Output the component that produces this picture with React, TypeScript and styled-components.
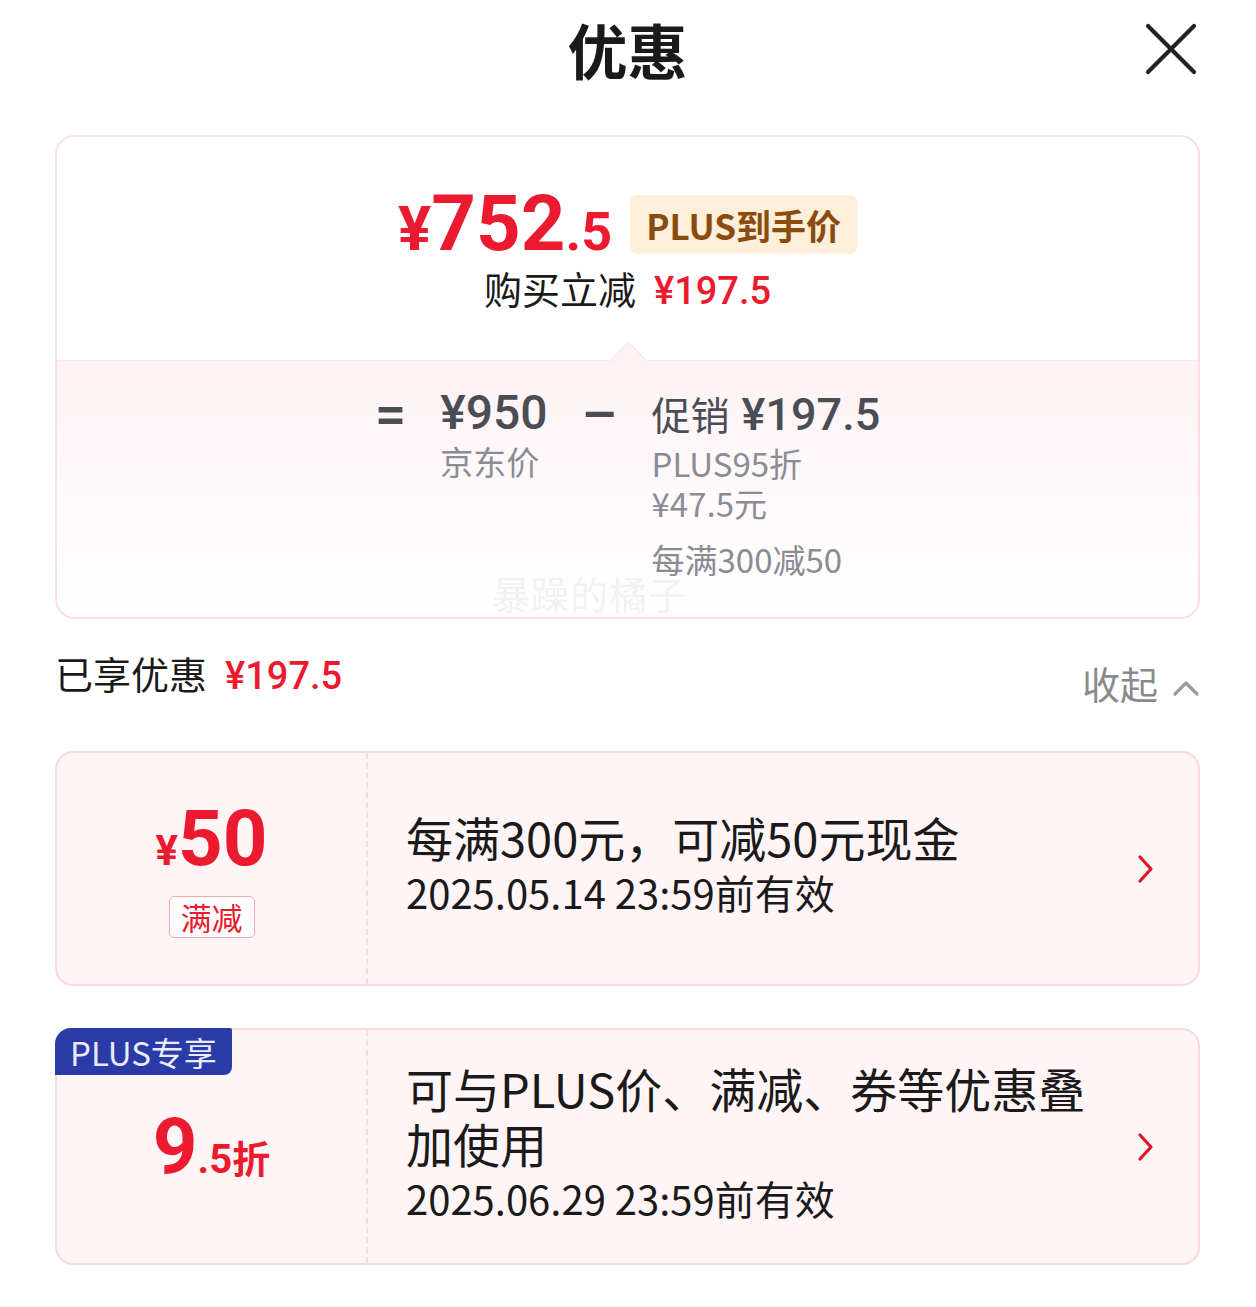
import { FC } from 'react';
import styled, { createGlobalStyle } from 'styled-components';

const GlobalStyle = createGlobalStyle`
  body {
    margin: 0;
    background: #ffffff;
    font-family: "Noto Sans CJK SC", "Noto Sans", sans-serif;
    color: #1a1a1a;
  }
`;

const RED = '#ec1a2e';
const NUM = `Roboto, "Noto Sans CJK SC", sans-serif`;

const Page = styled.div`
  width: 1256px;
  box-sizing: border-box;
  padding: 0 56px 40px 55px;
`;

const Header = styled.div`
  height: 98px;
  display: grid;
  grid-template-columns: 1fr auto 1fr;
  align-items: center;
`;

const Title = styled.h1`
  grid-column: 2;
  margin: 0;
  font-size: 60px;
  font-weight: 700;
  line-height: 1;
  color: #1a1a1a;
`;

const CloseBtn = styled.button`
  grid-column: 3;
  justify-self: end;
  margin-right: 2px;
  padding: 0;
  border: 0;
  background: none;
  width: 54px;
  height: 54px;
  display: flex;
`;

const SummaryCard = styled.div`
  margin-top: 37px;
  border: 2px solid #fbdde2;
  border-radius: 20px;
  overflow: hidden;
  position: relative;
`;

const SummaryTop = styled.div`
  height: 223px;
  box-sizing: border-box;
  padding-top: 48px;
  display: flex;
  flex-direction: column;
  align-items: center;
  background: #ffffff;
  position: relative;
`;

const PriceRow = styled.div`
  display: flex;
  align-items: center;
  gap: 18px;
`;

const Price = styled.div`
  display: flex;
  align-items: baseline;
  color: ${RED};
  font-family: ${NUM};
  font-weight: 700;
  line-height: 1;
`;

const PricePart = styled.span<{ $size: number }>`
  font-size: ${p => p.$size}px;
`;

const PlusBadge = styled.span`
  display: inline-flex;
  align-items: center;
  height: 59px;
  padding: 0 16px;
  border-radius: 7px;
  background: #fdefd9;
  color: #8a4b0f;
  font-size: 35px;
  font-weight: 700;
`;

const SubLine = styled.div`
  margin-top: 2px;
  font-size: 38px;
  line-height: 46px;
  display: flex;
  align-items: baseline;
`;

const RedAmount = styled.span<{ $size: number; $weight?: number }>`
  color: ${RED};
  font-family: ${NUM};
  font-size: ${p => p.$size}px;
  font-weight: ${p => p.$weight ?? 500};
  margin-left: 18px;
`;

const Notch = styled.span`
  position: absolute;
  left: 50%;
  bottom: -12px;
  width: 24px;
  height: 24px;
  margin-left: -12px;
  background: #fdf3f5;
  border-top: 1px solid #fbe3e8;
  border-left: 1px solid #fbe3e8;
  transform: rotate(45deg);
`;

const SummaryBottom = styled.div`
  height: 257px;
  box-sizing: border-box;
  padding-top: 24px;
  border-top: 1px solid #fbe8ec;
  background: linear-gradient(180deg, #fdf2f4 0%, #fffafb 60%, #ffffff 100%);
  display: flex;
  justify-content: center;
  align-items: flex-start;
  gap: 34px;
`;

const Operator = styled.span`
  font-family: ${NUM};
  font-size: 56px;
  font-weight: 500;
  line-height: 60px;
  color: #4b4d55;
`;

const Column = styled.div`
  display: flex;
  flex-direction: column;
`;

const MainFigure = styled.div`
  font-size: 39px;
  line-height: 56px;
  color: #4b4d55;
  display: flex;
  align-items: baseline;
`;

const Figure = styled.span<{ $gap?: number; $size?: number }>`
  font-family: ${NUM};
  font-size: ${p => p.$size ?? 48}px;
  font-weight: 500;
  margin-left: ${p => p.$gap ?? 0}px;
`;

const Note = styled.div<{ $gap?: number }>`
  font-size: 33px;
  line-height: 40px;
  color: #8a8c94;
  margin-top: ${p => p.$gap ?? 0}px;
`;

const Watermark = styled.span`
  position: absolute;
  left: 435px;
  bottom: 2px;
  font-size: 38px;
  line-height: 44px;
  color: rgba(236, 236, 240, 0.7);
  letter-spacing: 1px;
`;

const SavedRow = styled.div`
  margin-top: 28px;
  display: flex;
  justify-content: space-between;
  align-items: flex-start;
`;

const SavedLabel = styled.div`
  font-size: 38px;
  line-height: 52px;
  display: flex;
  align-items: baseline;
`;

const Collapse = styled.div`
  margin-top: 10px;
  display: flex;
  align-items: center;
  gap: 14px;
  font-size: 38px;
  line-height: 52px;
  color: #8a8a8a;

  svg {
    margin-top: 10px;
  }
`;

const CouponList = styled.div`
  margin-top: 42px;
  display: flex;
  flex-direction: column;
  gap: 42px;
`;

const Coupon = styled.div<{ $height: number }>`
  position: relative;
  height: ${p => p.$height}px;
  box-sizing: border-box;
  border: 2px solid #f8dade;
  border-radius: 18px;
  background: #fff5f6;
  display: flex;
`;

const CouponLeft = styled.div`
  width: 309px;
  flex-shrink: 0;
  border-right: 2px dashed #f3dce0;
  display: flex;
  flex-direction: column;
  align-items: center;
  justify-content: center;
`;

const Amount = styled.div`
  display: flex;
  align-items: baseline;
  color: ${RED};
  font-family: ${NUM};
  font-weight: 700;
  line-height: 1;
`;

const AmountPart = styled.span<{ $size: number; $font?: string }>`
  font-size: ${p => p.$size}px;
  font-family: ${p => p.$font ?? NUM};
`;

const TypeTag = styled.span`
  margin-top: 18px;
  padding: 0 11px;
  height: 42px;
  box-sizing: border-box;
  display: inline-flex;
  align-items: center;
  border: 1px solid #f2a9b1;
  border-radius: 5px;
  background: #ffffff;
  color: ${RED};
  font-size: 31px;
`;

const PlusTag = styled.span`
  position: absolute;
  left: -2px;
  top: -2px;
  height: 47px;
  padding: 0 15px;
  display: inline-flex;
  align-items: center;
  background: #2a3aa7;
  color: #e9ebf7;
  font-size: 33px;
  border-radius: 16px 2px 8px 0;
`;

const CouponBody = styled.div`
  flex: 1;
  padding-left: 38px;
  display: flex;
  align-items: center;
  justify-content: space-between;
  padding-right: 42px;
`;

const CouponText = styled.div`
  max-width: 700px;
  margin-top: -8px;
`;

const CouponTitle = styled.div`
  font-size: 47px;
  line-height: 55px;
  color: #1a1a1a;
`;

const CouponDate = styled.div`
  font-size: 40px;
  line-height: 56px;
  color: #1a1a1a;
`;

const Chevron = styled.svg`
  flex-shrink: 0;
`;

interface CouponData {
  id: string;
  height: number;
  title: string;
  date: string;
  plus?: boolean;
}

const coupons: CouponData[] = [
  { id: 'full', height: 235, title: '每满300元，可减50元现金', date: '2025.05.14 23:59前有效' },
  { id: 'plus', height: 237, title: '可与PLUS价、满减、券等优惠叠加使用', date: '2025.06.29 23:59前有效', plus: true },
];

const ChevronRight: FC = () => (
  <Chevron width="20" height="32" viewBox="0 0 20 32">
    <path d="M4 4 L15 16 L4 28" fill="none" stroke="#d9182b" strokeWidth="3.2" strokeLinecap="round" strokeLinejoin="round" />
  </Chevron>
);

const App: FC = () => {
  return (
    <Page>
      <GlobalStyle />
      <Header>
        <Title>优惠</Title>
        <CloseBtn aria-label="关闭">
          <svg width="54" height="54" viewBox="0 0 54 54">
            <path d="M4 4 L50 50 M50 4 L4 50" stroke="#222" strokeWidth="4.2" strokeLinecap="round" />
          </svg>
        </CloseBtn>
      </Header>

      <SummaryCard>
        <SummaryTop>
          <PriceRow>
            <Price>
              <PricePart $size={62}>¥</PricePart>
              <PricePart $size={78}>752</PricePart>
              <PricePart $size={54}>.5</PricePart>
            </Price>
            <PlusBadge>PLUS到手价</PlusBadge>
          </PriceRow>
          <SubLine>
            购买立减<RedAmount $size={38}>¥197.5</RedAmount>
          </SubLine>
          <Notch />
        </SummaryTop>
        <SummaryBottom>
          <Operator>=</Operator>
          <Column>
            <MainFigure><Figure>¥950</Figure></MainFigure>
            <Note>京东价</Note>
          </Column>
          <Operator>–</Operator>
          <Column>
            <MainFigure>促销<Figure $gap={12} $size={45}>¥197.5</Figure></MainFigure>
            <Note>PLUS95折</Note>
            <Note>¥47.5元</Note>
            <Note $gap={16}>每满300减50</Note>
          </Column>
        </SummaryBottom>
        <Watermark>暴躁的橘子</Watermark>
      </SummaryCard>

      <SavedRow>
        <SavedLabel>
          已享优惠<RedAmount $size={38}>¥197.5</RedAmount>
        </SavedLabel>
        <Collapse>
          收起
          <svg width="28" height="20" viewBox="0 0 28 20">
            <path d="M3 16 L14 5 L25 16" fill="none" stroke="#9a9a9a" strokeWidth="3.2" strokeLinecap="round" strokeLinejoin="round" />
          </svg>
        </Collapse>
      </SavedRow>

      <CouponList>
        {coupons.map(c => (
          <Coupon key={c.id} $height={c.height}>
            {c.plus && <PlusTag>PLUS专享</PlusTag>}
            <CouponLeft>
              {c.plus ? (
                <Amount>
                  <AmountPart $size={78}>9</AmountPart>
                  <AmountPart $size={40}>.5</AmountPart>
                  <AmountPart $size={38} $font={`"Noto Sans CJK SC", sans-serif`}>折</AmountPart>
                </Amount>
              ) : (
                <>
                  <Amount>
                    <AmountPart $size={42}>¥</AmountPart>
                    <AmountPart $size={78}>50</AmountPart>
                  </Amount>
                  <TypeTag>满减</TypeTag>
                </>
              )}
            </CouponLeft>
            <CouponBody>
              <CouponText>
                <CouponTitle>{c.title}</CouponTitle>
                <CouponDate>{c.date}</CouponDate>
              </CouponText>
              <ChevronRight />
            </CouponBody>
          </Coupon>
        ))}
      </CouponList>
    </Page>
  );
};

export default App;
